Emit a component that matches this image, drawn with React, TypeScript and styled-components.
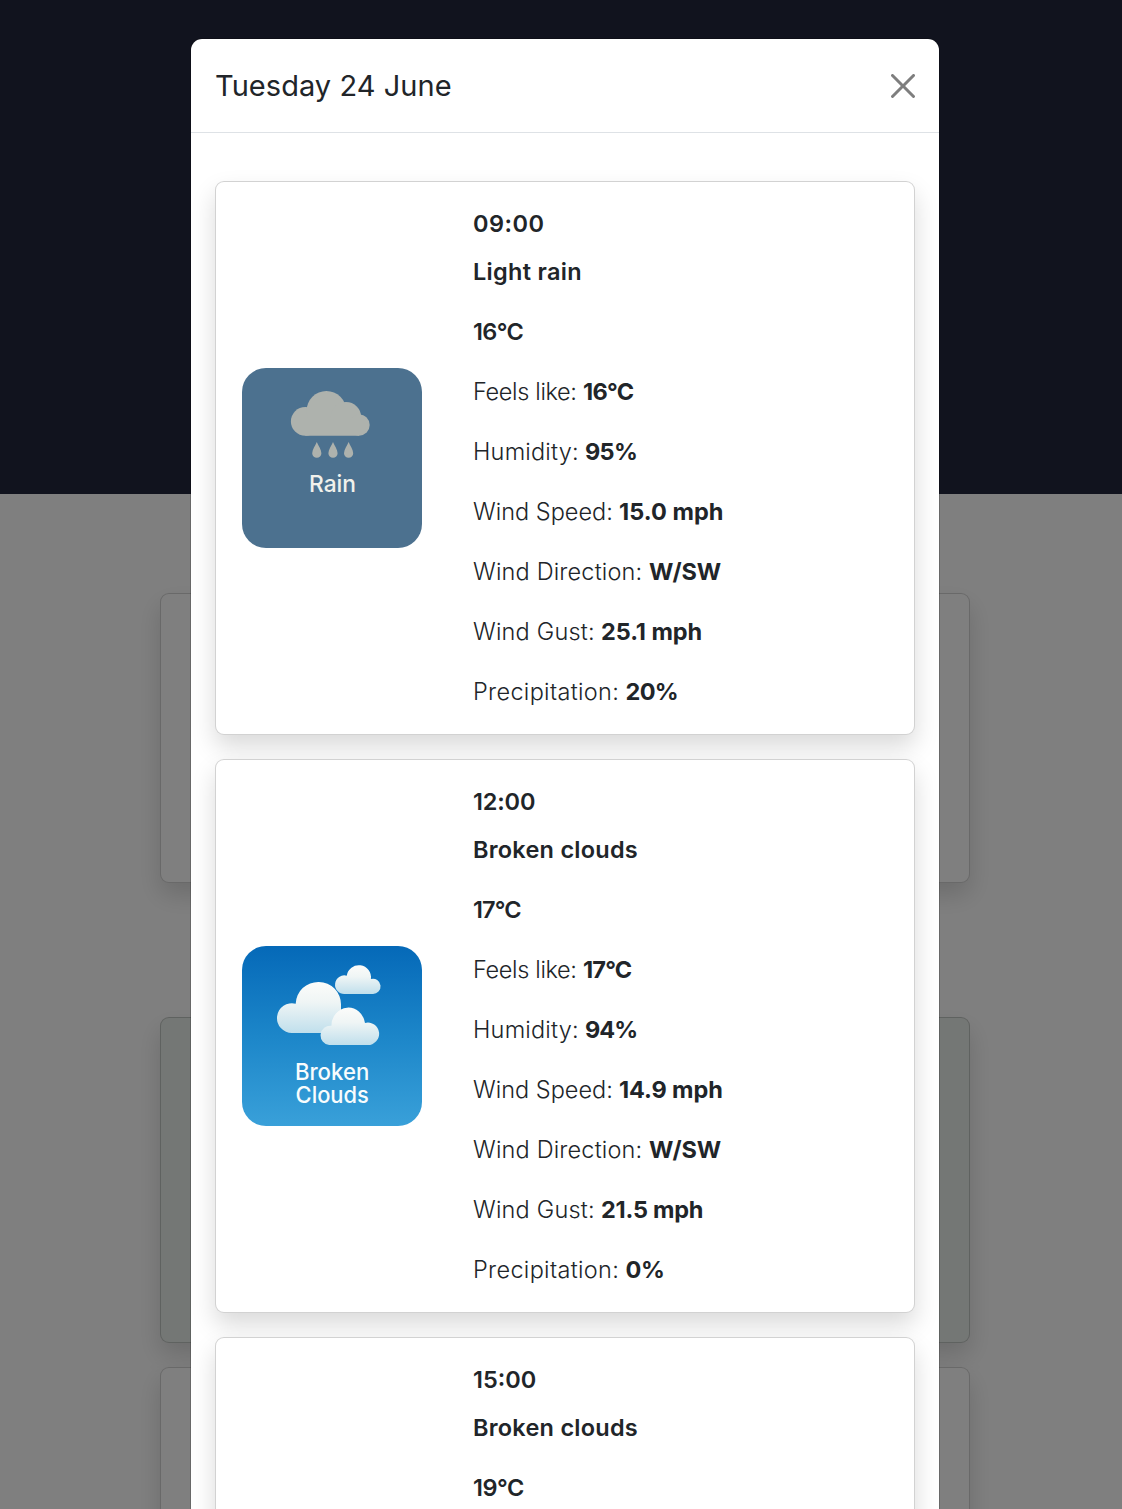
import React from 'react';
import styled, { createGlobalStyle } from 'styled-components';

const GlobalStyle = createGlobalStyle`
  *, *::before, *::after { box-sizing: border-box; }
  html, body { margin: 0; padding: 0; overflow: hidden; background: #fff; }
  body {
    font-family: Inter, "Liberation Sans", sans-serif;
    color: #212529;
  }
  h1, h2, p { margin: 0; }
`;

const Page = styled.div`
  position: relative;
  width: 1130px;
  height: 1509px;
  overflow: hidden;
`;

const Hero = styled.header`
  height: 494px;
  background: #22273d;
`;

const Forecast = styled.main`
  display: flex;
  flex-direction: column;
  align-items: center;
  padding-top: 99px;
`;

const Panel = styled.section<{ $height: number; $gap: number; $tint?: string }>`
  width: 810px;
  height: ${p => p.$height}px;
  margin-bottom: ${p => p.$gap}px;
  flex-shrink: 0;
  background: ${p => p.$tint || '#fff'};
  border: 1px solid rgba(0, 0, 0, 0.175);
  border-radius: 9px;
  box-shadow: 0 12px 24px rgba(0, 0, 0, 0.15);
`;

const Backdrop = styled.div`
  position: absolute;
  inset: 0;
  display: flex;
  justify-content: center;
  align-items: flex-start;
  padding-top: 38px;
  background: rgba(0, 0, 0, 0.5);
`;

const Dialog = styled.div`
  width: 750px;
  background: #fff;
  background-clip: padding-box;
  border: 1px solid rgba(0, 0, 0, 0.175);
  border-radius: 12px;
`;

const DialogHeader = styled.div`
  display: flex;
  align-items: center;
  justify-content: space-between;
  height: 94px;
  padding: 0 24px;
  border-bottom: 1px solid #dee2e6;
`;

const DialogTitle = styled.h1`
  font-size: 29px;
  font-weight: 400;
  line-height: 45px;
  letter-spacing: 0.05px;
`;

const CloseButton = styled.button`
  display: flex;
  padding: 0;
  border: 0;
  background: none;
  color: #000;
  opacity: 0.5;
`;

const DialogBody = styled.div`
  display: flex;
  flex-direction: column;
  gap: 24px;
  padding: 48px 24px 24px;
`;

const HourCard = styled.article`
  display: flex;
  align-items: center;
  height: 554px;
  flex-shrink: 0;
  padding: 24px 26px;
  background: #fff;
  border: 1px solid rgba(0, 0, 0, 0.175);
  border-radius: 9px;
  box-shadow: 0 12px 24px rgba(0, 0, 0, 0.15);
`;

const TileSlot = styled.div`
  width: 180px;
  height: 180px;
  flex-shrink: 0;
  overflow: hidden;
  border-radius: 24px;
`;

const Tile = styled.svg`
  display: block;
  width: 180px;
  height: 180px;
  font-family: Inter, "Liberation Sans", sans-serif;
`;

const Details = styled.div<{ $top: boolean }>`
  display: flex;
  flex-direction: column;
  align-self: ${p => (p.$top ? 'flex-start' : 'center')};
  gap: 24px;
  margin-left: 51px;
  font-size: 23.5px;
  line-height: 36px;
  white-space: nowrap;
`;

const Heading = styled.h2<{ $track: number }>`
  font-size: inherit;
  font-weight: 640;
  letter-spacing: ${p => p.$track}px;

  &:first-child { margin-bottom: -12px; }
`;

const Line = styled.p`
  display: flex;
`;

const Label = styled.span<{ $width: number; $track: number }>`
  width: ${p => p.$width}px;
  font-weight: 320;
  letter-spacing: ${p => p.$track}px;
`;

const Value = styled.strong<{ $track: number }>`
  font-weight: 680;
  letter-spacing: ${p => p.$track}px;
`;

const RainTile = () => (
  <Tile viewBox="0 0 180 180">
    <rect width="180" height="180" fill="#4c718f" />
    <g fill="#aeb2ad">
      <circle cx="63.3" cy="53.4" r="14.4" />
      <circle cx="84.4" cy="42.8" r="19.8" />
      <circle cx="104" cy="49.2" r="15.2" />
      <circle cx="117.1" cy="57.1" r="10.6" />
      <path d="M63.3 50H117v17.7H63.3z" />
      {[74.8, 91, 106.6].map(x => (
        <path
          key={x}
          d={`M${x} 74c-1.4 3.8-4.6 7.4-4.6 11.2a4.6 4.6 0 0 0 9.2 0c0-3.8-3.2-7.4-4.6-11.2z`}
        />
      ))}
    </g>
    <text x="67" y="124.3" fill="#f1f1ec" fontSize="22.8" fontWeight="540" textLength="47" lengthAdjust="spacingAndGlyphs">Rain</text>
  </Tile>
);

const BrokenCloudsTile = () => (
  <Tile viewBox="0 0 180 180">
    <defs>
      <linearGradient id="sky" x1="0" y1="0" x2="0" y2="1">
        <stop offset="0" stopColor="#0569b8" />
        <stop offset="0.5" stopColor="#1c86c9" />
        <stop offset="1" stopColor="#39a0d9" />
      </linearGradient>
      <linearGradient id="cloud" x1="0" y1="0" x2="0" y2="1">
        <stop offset="0" stopColor="#fcfcfa" />
        <stop offset="0.4" stopColor="#eff5f5" />
        <stop offset="1" stopColor="#c0dfec" />
      </linearGradient>
    </defs>
    <rect width="180" height="180" fill="url(#sky)" />
    <g fill="url(#cloud)">
      <path d="M102.3 48a9.3 9.3 0 1 1 2.4-18.3a12.1 12.1 0 0 1 24.2 3.4A7.6 7.6 0 1 1 130.6 48z" />
      <path d="M50.2 87a14.9 14.9 0 1 1 3.5-29.3a22.65 22.3 0 0 1 45.3 1V87z" />
      <path d="M87.2 99a9.7 9.7 0 1 1 2.2-19.3a16.9 18.2 0 0 1 33.6-2.7A11.2 11.2 0 1 1 125.6 99z" />
    </g>
    <g fill="#f8fcfd" fontSize="22.4" fontWeight="450">
      <text x="52.9" y="133.8" textLength="74.4" lengthAdjust="spacingAndGlyphs">Broken</text>
      <text x="53.6" y="156.8" textLength="73.2" lengthAdjust="spacingAndGlyphs">Clouds</text>
    </g>
  </Tile>
);

// Text paired with its letter spacing.
type Tracked = [string, number];

interface Hour {
  time: Tracked;
  summary: Tracked;
  temp: Tracked;
  icon?: 'rain' | 'clouds';
  values: Tracked[];
}

const labels: { text: string; width: number; track: number }[] = [
  { text: 'Feels like:', width: 110, track: -0.35 },
  { text: 'Humidity:', width: 112, track: 0.2 },
  { text: 'Wind Speed:', width: 146, track: 0 },
  { text: 'Wind Direction:', width: 176, track: 0.17 },
  { text: 'Wind Gust:', width: 128, track: 0.2 },
  { text: 'Precipitation:', width: 152.6, track: 0.32 },
];

const hours: Hour[] = [
  {
    time: ['09:00', 0.5],
    summary: ['Light rain', 0.3],
    temp: ['16°C', -0.6],
    icon: 'rain',
    values: [['16°C', -0.7], ['95%', -0.7], ['15.0 mph', 0.05], ['W/SW', -0.15], ['25.1 mph', -0.05], ['20%', -0.7]],
  },
  {
    time: ['12:00', -0.15],
    summary: ['Broken clouds', 0.25],
    temp: ['17°C', -0.9],
    icon: 'clouds',
    values: [['17°C', -0.8], ['94%', -1], ['14.9 mph', -0.1], ['W/SW', -0.15], ['21.5 mph', -0.25], ['0%', -0.4]],
  },
  {
    time: ['15:00', 0],
    summary: ['Broken clouds', 0.25],
    temp: ['19°C', -0.5],
    values: [],
  },
];

const HourForecast = ({ hour }: { hour: Hour }) => (
  <HourCard>
    <TileSlot>
      {hour.icon === 'rain' && <RainTile />}
      {hour.icon === 'clouds' && <BrokenCloudsTile />}
    </TileSlot>
    <Details $top={hour.values.length === 0}>
      {[hour.time, hour.summary, hour.temp].map(([text, track]) => (
        <Heading key={text} $track={track}>{text}</Heading>
      ))}
      {hour.values.map(([text, track], i) => (
        <Line key={labels[i].text}>
          <Label $width={labels[i].width} $track={labels[i].track}>{labels[i].text}</Label>
          <Value $track={track}>{text}</Value>
        </Line>
      ))}
    </Details>
  </HourCard>
);

export default function App() {
  return (
    <>
      <GlobalStyle />
      <Page>
        <Hero />
        <Forecast>
          <Panel $height={290} $gap={134} />
          <Panel $height={326} $gap={24} $tint="#e8eeea" />
          <Panel $height={326} $gap={24} />
        </Forecast>
        <Backdrop>
          <Dialog role="dialog">
            <DialogHeader>
              <DialogTitle>Tuesday 24 June</DialogTitle>
              <CloseButton aria-label="Close">
                <svg width="24" height="24" viewBox="0 0 16 16" fill="currentColor">
                  <path d="M.293.293a1 1 0 0 1 1.414 0L8 6.586 14.293.293a1 1 0 1 1 1.414 1.414L9.414 8l6.293 6.293a1 1 0 0 1-1.414 1.414L8 9.414l-6.293 6.293a1 1 0 0 1-1.414-1.414L6.586 8 .293 1.707a1 1 0 0 1 0-1.414" />
                </svg>
              </CloseButton>
            </DialogHeader>
            <DialogBody>
              {hours.map((hour, i) => (
                <HourForecast key={i} hour={hour} />
              ))}
            </DialogBody>
          </Dialog>
        </Backdrop>
      </Page>
    </>
  );
}
